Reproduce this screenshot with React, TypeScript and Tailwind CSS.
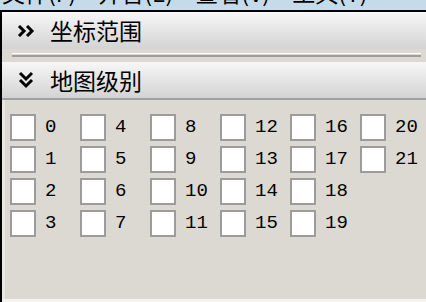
import React from 'react';

const cjk = { fontFamily: '"Noto Sans CJK SC", "Noto Sans", sans-serif' };
const mono = { fontFamily: '"Liberation Mono", "DejaVu Sans Mono", monospace' };

function Header({ open, title }: { open: boolean; title: string }) {
  return (
    <div className="flex items-center h-full pl-[14px] bg-linear-to-b from-[#f7f7f7] to-[#d3d3d3]">
      <div className="w-[20px] h-[20px] flex items-center justify-center">
        {open ? (
          <svg width="16" height="18" viewBox="0 0 16 18" fill="none" stroke="#000" strokeWidth="3" strokeLinejoin="miter">
            <path d="M2 2l6 6 6-6M2 9l6 6 6-6" />
          </svg>
        ) : (
          <svg width="18" height="12" viewBox="0 0 18 12" fill="none" stroke="#000" strokeWidth="3" strokeLinejoin="miter">
            <path d="M2 1l5 5-5 5M10 1l5 5-5 5" />
          </svg>
        )}
      </div>
      <span className="ml-[14px] text-[23px] leading-none text-black" style={cjk}>
        {title}
      </span>
    </div>
  );
}

export default function App() {
  const levels = Array.from({ length: 22 }, (_, i) => i);

  return (
    <div className="w-[426px] h-[302px] overflow-hidden flex flex-col bg-[#dcd9d3]">
      {/* menu bar, mostly cut off */}
      <div className="h-[10px] bg-[#c6dbea] overflow-hidden shrink-0">
        <div className="-mt-[19px] flex gap-[22px] pl-[2px] text-[23px] leading-none text-black whitespace-nowrap" style={cjk}>
          <span>文件(F)</span>
          <span>并音(E)</span>
          <span>查看(V)</span>
          <span>工具(T)</span>
        </div>
      </div>
      <div className="h-[2px] bg-black shrink-0" />

      <div className="flex-1 flex flex-col border-l-2 border-black">
        <div className="h-[37px] shrink-0">
          <Header open={false} title="坐标范围" />
        </div>

        <div className="h-[13px] shrink-0 bg-[#dcd9d2] pt-[4px] pl-[10px] pr-[5px]">
          <div className="h-px bg-white" />
          <div className="h-[2px] mt-[1px] bg-[#9e9e9e]" />
        </div>

        <div className="h-[36px] shrink-0">
          <Header open={true} title="地图级别" />
        </div>
        <div className="h-[2px] shrink-0 bg-[#a0a0a0]" />

        <div className="flex-1 border-l-[3px] border-[#e9e7e2] pt-[14px] pl-[5px]">
          <div className="grid grid-flow-col grid-rows-[repeat(4,32px)] auto-cols-[70px]">
            {levels.map((n) => (
              <label key={n} className="flex items-start">
                <span className="w-[26px] h-[27px] shrink-0 border-2 border-[#9c9c9c] bg-white" />
                <span className="ml-[9px] mt-[1px] text-[19px] leading-[24px] text-black" style={mono}>
                  {n}
                </span>
              </label>
            ))}
          </div>
        </div>
        <div className="h-[3px] shrink-0 bg-[#f4f3f0]" />
      </div>
    </div>
  );
}
